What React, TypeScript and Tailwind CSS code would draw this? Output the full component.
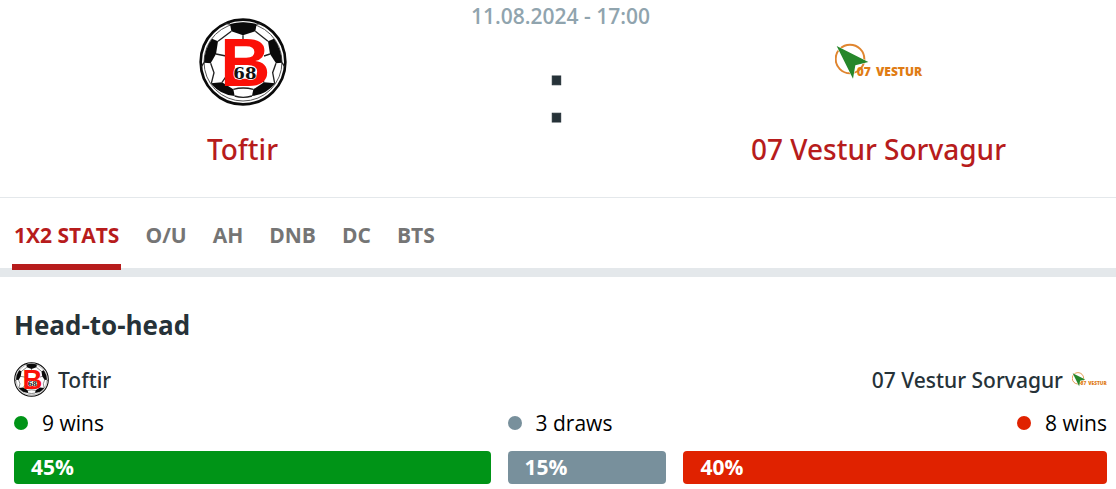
import React, { useState } from 'react';

interface LogoProps {
    className?: string;
}

interface Team {
    name: string;
    Logo: React.FC<LogoProps>;
}

const ToftirLogo: React.FC<LogoProps> = ({ className }) => (
    <svg viewBox="27 24 264 264" className={className} role="img" aria-label="Toftir logo">
        <circle cx="159" cy="156" r="127" fill="#fff" stroke="#0a0a0a" strokeWidth="8" />
        <circle cx="159" cy="156" r="117" fill="none" stroke="#555" strokeWidth="3" />
        <g fill="#0a0a0a">
            <path d="M120 42 Q159 32 200 42 L196 64 L159 76 L124 64 Z" />
            <path d="M66 86 L84 94 L78 132 L62 160 L42 158 Q44 116 66 86 Z" />
            <path d="M252 86 L234 94 L240 132 L258 160 L276 158 Q274 116 252 86 Z" />
            <path d="M62 220 L96 217 L130 238 L134 258 Q92 256 62 220 Z" />
            <path d="M256 220 L222 217 L190 238 L186 258 Q226 256 256 220 Z" />
        </g>
        <g fill="none" stroke="#222" strokeWidth="4">
            <path d="M159 76 V92 M124 64 L84 94 M196 64 L234 94 M78 132 L108 138 M240 132 L222 138" />
            <path d="M62 160 L72 188 L64 220 M258 160 L248 188 L254 220 M96 217 L108 200 M222 217 L214 204" />
            <path d="M130 238 Q159 230 190 238 M134 258 Q159 266 186 258 M120 42 L104 40 M200 42 L214 40 M42 158 L34 170 M276 158 L284 170" />
        </g>
        <text x="91" y="229" fontFamily="'Liberation Sans', sans-serif" fontWeight="700" fontSize="208" fill="#fb1008">B</text>
        <text x="130" y="207" fontFamily="'DejaVu Serif', serif" fontWeight="700" fontSize="50" fill="#111" stroke="#fff" strokeWidth="4" paintOrder="stroke">68</text>
    </svg>
);

const VesturLogo: React.FC<LogoProps> = ({ className }) => (
    <svg viewBox="27 -48 264 264" className={className} role="img" aria-label="07 Vestur logo">
        <circle cx="72" cy="75" r="43" fill="none" stroke="#e0852f" strokeWidth="6" />
        <path d="M32 36 L127 84 L88 94 L81 134 Z" fill="#26872a" stroke="#fff" strokeWidth="3" paintOrder="stroke" />
        <g fontFamily="'Open Sans', sans-serif" fontWeight="800" fontSize="36" fill="#e07c14">
            <text x="92" y="125">07</text>
            <text x="150" y="125">VESTUR</text>
        </g>
    </svg>
);

const home: Team = { name: 'Toftir', Logo: ToftirLogo };
const away: Team = { name: '07 Vestur Sorvagur', Logo: VesturLogo };

const tabs = ['1X2 STATS', 'O/U', 'AH', 'DNB', 'DC', 'BTS'];

const results = [
    { label: '9 wins', percent: 45, color: 'bg-[#009417]', align: 'justify-start' },
    { label: '3 draws', percent: 15, color: 'bg-[#78909c]', align: 'justify-start' },
    { label: '8 wins', percent: 40, color: 'bg-[#e02200]', align: 'justify-end' },
];

const HeaderTeam: React.FC<{ team: Team }> = ({ team }) => (
    <div className="flex flex-1 flex-col items-center pt-[18px]">
        <team.Logo className="h-[88px] w-[88px]" />
        <a href="#" className="mt-6 font-['Noto_Sans',sans-serif] text-[28px] leading-[38px] font-medium text-[#b71c1c]">{team.name}</a>
    </div>
);

const App: React.FC = () => {
    const [activeTab, setActiveTab] = useState(tabs[0]);

    return (
        <div className="bg-white font-['Open_Sans',sans-serif] text-[#263238]">
            <header className="flex border-b border-[#e4e8eb] pr-[9px] pb-[29px] pl-3.5">
                <HeaderTeam team={home} />
                <div className="flex flex-col items-center">
                    <time className="text-[21px] leading-8 font-semibold text-[#90a4ae]">11.08.2024 - 17:00</time>
                    <span className="mt-2.5 mr-2 font-['Liberation_Sans',sans-serif] text-[88px] leading-[100px] [-webkit-text-stroke:1px]">:</span>
                </div>
                <HeaderTeam team={away} />
            </header>

            <nav className="flex gap-[22px] border-b-9 border-[#e4e8eb] pt-[11px] pl-3">
                {tabs.map(tab => (
                    <button
                        key={tab}
                        type="button"
                        onClick={() => setActiveTab(tab)}
                        className={`-mb-0.5 border-b-6 px-0.5 pt-1.5 pb-[9px] text-[21px] leading-10 font-bold ${
                            tab === activeTab ? 'border-[#b71c1c] text-[#b71c1c]' : 'border-transparent text-[#757575]'
                        }`}
                    >
                        {tab}
                    </button>
                ))}
            </nav>

            <section className="pt-7 pr-[9px] pb-[5px] pl-3.5">
                <h2 className="text-[26px] leading-10 font-bold">Head-to-head</h2>
                <div className="mt-[17px] flex items-center justify-between font-['Noto_Sans',sans-serif] text-[21px] leading-7 font-medium">
                    <div className="flex items-center gap-[9px]">
                        <home.Logo className="h-[35px] w-[35px]" />
                        <span>{home.name}</span>
                    </div>
                    <div className="flex items-center gap-[9px]">
                        <span>{away.name}</span>
                        <away.Logo className="h-[35px] w-[35px]" />
                    </div>
                </div>
                <div className="mt-3 flex gap-[17px]">
                    {results.map(({ label, percent, color, align }) => (
                        <div key={label} style={{ flex: `${percent} 1 0%` }}>
                            <div className={`flex items-center gap-3.5 text-[21px] leading-7 text-black ${align}`}>
                                <span className={`h-3.5 w-3.5 rounded-full ${color}`} />
                                {label}
                            </div>
                            <div className={`mt-3.5 rounded pl-[17px] text-[21px] leading-[33px] font-bold text-white ${color}`}>{percent}%</div>
                        </div>
                    ))}
                </div>
            </section>
        </div>
    );
};

export default App;
